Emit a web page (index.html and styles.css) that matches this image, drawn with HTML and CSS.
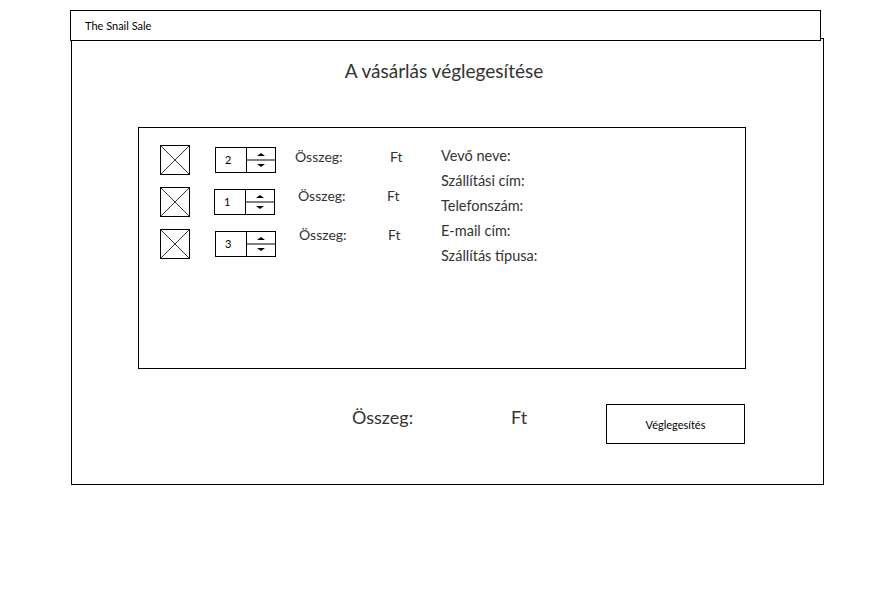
FILE: index.html
```html
<!DOCTYPE html>
<html lang="hu">
<head>
<meta charset="utf-8">
<title>The Snail Sale</title>
<link rel="stylesheet" href="styles.css">
</head>
<body>
<div class="page">
  <header class="topbar">The Snail Sale</header>
  <main class="frame">
    <h1 class="title">A vásárlás véglegesítése</h1>
    <section class="panel">
      <div class="items">
        <div class="item">
          <svg class="thumb" width="30" height="30" viewBox="0 0 30 30"><rect x="0.5" y="0.5" width="29" height="29" fill="#fff" stroke="#000"/><path d="M0.5 0.5L29.5 29.5M29.5 0.5L0.5 29.5" stroke="#000" stroke-width="0.8"/></svg>
          <div class="spinner"><span class="num">2</span><span class="arrows"><svg width="28" height="24" viewBox="0 0 28 24"><path d="M10 8L14 5L18 8Z" fill="#000"/><path d="M0 12H28" stroke="#808080" stroke-width="2"/><path d="M10 16L14 19L18 16Z" fill="#000"/></svg></span></div>
        </div>
        <div class="item">
          <svg class="thumb" width="30" height="30" viewBox="0 0 30 30"><rect x="0.5" y="0.5" width="29" height="29" fill="#fff" stroke="#000"/><path d="M0.5 0.5L29.5 29.5M29.5 0.5L0.5 29.5" stroke="#000" stroke-width="0.8"/></svg>
          <div class="spinner shift"><span class="num">1</span><span class="arrows"><svg width="28" height="24" viewBox="0 0 28 24"><path d="M10 8L14 5L18 8Z" fill="#000"/><path d="M0 12H28" stroke="#808080" stroke-width="2"/><path d="M10 16L14 19L18 16Z" fill="#000"/></svg></span></div>
        </div>
        <div class="item">
          <svg class="thumb" width="30" height="30" viewBox="0 0 30 30"><rect x="0.5" y="0.5" width="29" height="29" fill="#fff" stroke="#000"/><path d="M0.5 0.5L29.5 29.5M29.5 0.5L0.5 29.5" stroke="#000" stroke-width="0.8"/></svg>
          <div class="spinner"><span class="num">3</span><span class="arrows"><svg width="28" height="24" viewBox="0 0 28 24"><path d="M10 8L14 5L18 8Z" fill="#000"/><path d="M0 12H28" stroke="#808080" stroke-width="2"/><path d="M10 16L14 19L18 16Z" fill="#000"/></svg></span></div>
        </div>
      </div>
      <div class="sums">
        <div class="sum-row"><span class="sum">Összeg:</span><span class="ft">Ft</span></div>
        <div class="sum-row r2"><span class="sum">Összeg:</span><span class="ft">Ft</span></div>
        <div class="sum-row r3"><span class="sum">Összeg:</span><span class="ft">Ft</span></div>
      </div>
      <ul class="details">
        <li>Vevő neve:</li>
        <li>Szállítási cím:</li>
        <li>Telefonszám:</li>
        <li>E-mail cím:</li>
        <li>Szállítás típusa:</li>
      </ul>
    </section>
    <div class="total">
      <span class="total-label">Összeg:</span>
      <span class="total-ft">Ft</span>
      <button class="confirm" type="button">Véglegesítés</button>
    </div>
  </main>
</div>
</body>
</html>
```

FILE: styles.css
```css
html, body {
  margin: 0;
  padding: 0;
  background: #fff;
}
body {
  font-family: "Lato", "Noto Sans", sans-serif;
  color: #333;
}
.page {
  padding: 10px 0 0 70px;
}
.topbar {
  position: relative;
  z-index: 1;
  box-sizing: border-box;
  width: 751px;
  height: 31px;
  border: 1px solid #000;
  background: #fff;
  padding: 0 0 0 14px;
  font-size: 11px;
  line-height: 29px;
  color: #000;
}
.frame {
  box-sizing: border-box;
  width: 753px;
  height: 447px;
  margin: -3px 0 0 1px;
  border: 1px solid #000;
  padding: 0 0 0 66px;
}
.title {
  margin: 20px 0 0 0;
  width: 612px;
  text-align: center;
  font-weight: normal;
  font-size: 19px;
  line-height: 24px;
  color: #333;
}
.panel {
  box-sizing: border-box;
  width: 608px;
  height: 242px;
  margin-top: 44px;
  border: 1px solid #000;
  padding: 17px 0 0 21px;
  display: flex;
}
.items {
  display: flex;
  flex-direction: column;
  gap: 12px;
  width: 116px;
}
.item {
  display: flex;
  align-items: center;
  height: 30px;
}
.thumb {
  display: block;
  flex: none;
}
.spinner {
  display: flex;
  box-sizing: border-box;
  width: 61px;
  height: 26px;
  margin-left: 25px;
  border: 1px solid #000;
  background: #fff;
}
.spinner.shift {
  margin-left: 24px;
}
.num {
  box-sizing: border-box;
  width: 31px;
  border-right: 1px solid #000;
  font-size: 11px;
  line-height: 24px;
  padding-left: 9px;
  color: #000;
}
.arrows svg {
  display: block;
  width: 28px;
  height: 24px;
}
.sums {
  display: flex;
  flex-direction: column;
  gap: 19px;
  margin: 2px 0 0 19px;
  width: 146px;
}
.sum-row {
  display: flex;
  height: 20px;
  line-height: 20px;
  font-size: 14px;
}
.sum {
  width: 95px;
}
.r2 .sum { margin-left: 3px; width: 89px; }
.r3 .sum { margin-left: 4px; width: 89px; }
.details {
  list-style: none;
  margin: 0;
  padding: 0;
  font-size: 14.5px;
  line-height: 25px;
  margin-top: -2px;
}
.total {
  display: flex;
  align-items: flex-start;
  margin-top: 35px;
  width: 607px;
}
.total-label {
  margin: 1px 0 0 214px;
  font-size: 18px;
  line-height: 24px;
  width: 159px;
}
.total-ft {
  margin-top: 1px;
  font-size: 18px;
  line-height: 24px;
}
.confirm {
  margin-left: auto;
  box-sizing: border-box;
  width: 139px;
  height: 40px;
  border: 1px solid #000;
  background: #fff;
  font-family: "Lato", "Noto Sans", sans-serif;
  font-size: 11px;
  color: #000;
  padding: 0;
}
```
